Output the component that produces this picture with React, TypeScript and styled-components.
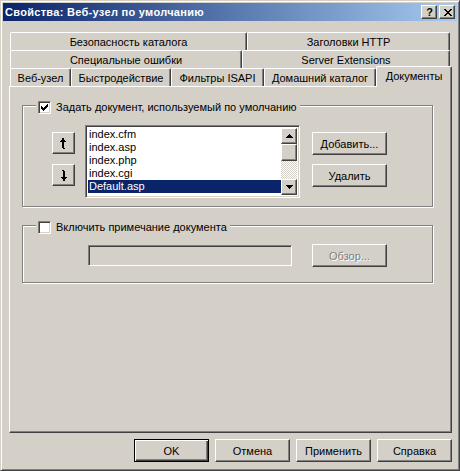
import React from 'react';
import styled, { createGlobalStyle, css } from 'styled-components';

const FACE = '#D4D0C8';
const SHADOW = '#808080';
const DARK = '#404040';

const GlobalStyle = createGlobalStyle`
  html, body { margin: 0; padding: 0; background: ${FACE}; }
  body {
    font-family: "Liberation Sans", Arial, sans-serif;
    font-size: 11px;
    color: #000;
  }
  * { box-sizing: border-box; }
`;

const raised = css`
  border: 1px solid;
  border-color: #fff ${DARK} ${DARK} #fff;
  box-shadow: inset -1px -1px 0 ${SHADOW}, inset 1px 1px 0 ${FACE};
  background: ${FACE};
`;

const sunken = css`
  border: 1px solid;
  border-color: ${SHADOW} #fff #fff ${SHADOW};
  box-shadow: inset 1px 1px 0 ${DARK}, inset -1px -1px 0 ${FACE};
`;

const Window = styled.div`
  width: 460px;
  height: 471px;
  background: ${FACE};
  border: 1px solid;
  border-color: ${FACE} ${DARK} ${DARK} ${FACE};
  box-shadow: inset 1px 1px 0 #fff, inset -1px -1px 0 ${SHADOW};
  padding: 2px;
  display: flex;
  flex-direction: column;
`;

const TitleBar = styled.div`
  height: 18px;
  display: flex;
  align-items: center;
  padding-left: 2px;
  background: linear-gradient(to right, #0a246a, #a6caf0);
`;

const TitleText = styled.div`
  flex: 1;
  color: #fff;
  font-weight: bold;
  font-size: 11px;
  letter-spacing: 0.3px;
  line-height: 18px;
  white-space: nowrap;
`;

const CaptionButtons = styled.div`
  display: flex;
  gap: 2px;
  margin-right: 2px;
`;

const CaptionButton = styled.div`
  ${raised};
  width: 16px;
  height: 14px;
  display: flex;
  align-items: center;
  justify-content: center;
  font-weight: bold;
  font-size: 11px;
  line-height: 12px;
  padding-left: 1px;
`;

const Body = styled.div`
  flex: 1;
  display: flex;
  flex-direction: column;
  padding: 11px 5px 0 6px;
`;

const TabStrip = styled.div`
  display: flex;
  flex-direction: column;
  margin-left: 1px;
`;

const TabRow = styled.div`
  display: flex;
  align-items: flex-end;
  height: 18px;
`;

const Tab = styled.div<{ $w: number; $active?: boolean }>`
  width: ${(p) => p.$w}px;
  height: ${(p) => (p.$active ? 21 : 18)}px;
  flex: none;
  display: flex;
  align-items: center;
  justify-content: center;
  white-space: nowrap;
  background: ${FACE};
  border-top: 1px solid #fff;
  border-left: 1px solid #fff;
  border-right: 1px solid ${DARK};
  border-radius: 2px 2px 0 0;
  box-shadow: inset -1px 0 0 ${SHADOW};
  padding-top: ${(p) => (p.$active ? 0 : 1)}px;
  padding-bottom: ${(p) => (p.$active ? 3 : 0)}px;
  ${(p) =>
    p.$active &&
    css`
      position: relative;
      z-index: 1;
      margin-bottom: -1px;
    `}
`;

const Panel = styled.div`
  height: 347px;
  border: 1px solid;
  border-color: #fff ${DARK} ${DARK} #fff;
  box-shadow: inset -1px -1px 0 ${SHADOW};
  padding: 18px 0 0 12px;
  display: flex;
  flex-direction: column;
`;

const Group = styled.div<{ $gap?: number; $bottom: number }>`
  width: 411px;
  margin-top: ${(p) => p.$gap ?? 0}px;
  border: 1px solid ${SHADOW};
  box-shadow: 1px 1px 0 #fff, inset 1px 1px 0 #fff;
  padding-bottom: ${(p) => p.$bottom}px;
`;

const Legend = styled.label`
  display: flex;
  align-items: center;
  gap: 5px;
  width: fit-content;
  height: 13px;
  line-height: 13px;
  margin: -5px 0 0 13px;
  padding: 0 3px 0 2px;
  background: ${FACE};
  white-space: nowrap;
`;

const CheckBox = styled.span`
  ${sunken};
  width: 13px;
  height: 13px;
  background: #fff;
  display: flex;
  align-items: center;
  justify-content: center;
  flex: none;
`;

const ListRow = styled.div`
  display: flex;
  margin-top: 11px;
  padding-left: 29px;
`;

const ArrowColumn = styled.div`
  display: flex;
  flex-direction: column;
  gap: 10px;
  padding-top: 7px;
`;

const ArrowButton = styled.div`
  ${raised};
  width: 23px;
  height: 22px;
  display: flex;
  align-items: center;
  justify-content: center;
`;

const ListBox = styled.div`
  ${sunken};
  width: 215px;
  height: 73px;
  margin-left: 10px;
  background: #fff;
  padding: 2px;
  display: flex;
  overflow: hidden;
`;

const Items = styled.div`
  flex: 1;
  overflow: hidden;
`;

const Item = styled.div<{ $selected?: boolean }>`
  height: 13px;
  line-height: 13px;
  padding-left: 1px;
  white-space: nowrap;
  background: ${(p) => (p.$selected ? '#0a246a' : 'transparent')};
  color: ${(p) => (p.$selected ? '#fff' : '#000')};
`;

const ScrollBar = styled.div`
  width: 16px;
  display: flex;
  flex-direction: column;
`;

const ScrollButton = styled.div<{ $h: number }>`
  ${raised};
  height: ${(p) => p.$h}px;
  flex: none;
  display: flex;
  align-items: center;
  justify-content: center;
`;

const Track = styled.div`
  flex: 1;
  background: repeating-conic-gradient(#fff 0 25%, ${FACE} 0 50%) 0 0 / 2px 2px;
`;

const SideColumn = styled.div`
  display: flex;
  flex-direction: column;
  gap: 9px;
  padding-top: 7px;
  margin-left: 12px;
`;

const Button = styled.div<{ $default?: boolean; $disabled?: boolean }>`
  ${raised};
  width: 75px;
  height: 23px;
  flex: none;
  display: flex;
  align-items: center;
  justify-content: center;
  white-space: nowrap;
  ${(p) =>
    p.$default &&
    css`
      border: 1px solid #000;
      box-shadow: inset 1px 1px 0 #fff, inset -1px -1px 0 ${DARK}, inset -2px -2px 0 ${SHADOW};
    `}
  ${(p) =>
    p.$disabled &&
    css`
      color: ${SHADOW};
      text-shadow: 1px 1px 0 #fff;
    `}
`;

const NoteRow = styled.div`
  display: flex;
  align-items: center;
  gap: 20px;
  margin-top: 10px;
  padding-left: 65px;
`;

const TextInput = styled.div`
  ${sunken};
  width: 204px;
  height: 21px;
  background: ${FACE};
`;

const Footer = styled.div`
  display: flex;
  justify-content: flex-end;
  gap: 6px;
  margin-top: 6px;
`;

const Check = () => (
  <svg width="7" height="7" viewBox="0 0 7 7" shapeRendering="crispEdges">
    <path d="M6 0h1v3h-1v1h-1v1h-1v1h-1v1h-1v-1h-1v-1h-1v-3h1v1h1v1h1v-1h1v-1h1z" fill="#000" />
  </svg>
);

const CloseGlyph = () => (
  <svg width="8" height="7" viewBox="0 0 8 7" shapeRendering="crispEdges">
    <path
      d="M0 0h2v1h1v1h2v-1h1v-1h2v1h-1v1h-1v1h-1v1h1v1h1v1h1v1h-2v-1h-1v-1h-2v1h-1v1h-2v-1h1v-1h1v-1h1v-1h-1v-1h-1v-1h-1z"
      fill="#000"
    />
  </svg>
);

const UpGlyph = () => (
  <svg width="7" height="11" viewBox="0 0 7 11" shapeRendering="crispEdges">
    <path d="M2 0h2v2h1v1h1v1h-2v6h1v1h-2v-1h-1v-6h-2v-1h1v-1h1z" fill="#000" />
  </svg>
);

const DownGlyph = () => (
  <svg width="7" height="11" viewBox="0 0 7 11" shapeRendering="crispEdges" style={{ transform: 'rotate(180deg)' }}>
    <path d="M2 0h2v2h1v1h1v1h-2v6h1v1h-2v-1h-1v-6h-2v-1h1v-1h1z" fill="#000" />
  </svg>
);

const TriUp = () => (
  <svg width="7" height="4" viewBox="0 0 7 4" shapeRendering="crispEdges">
    <path d="M3 0h1v1h1v1h1v1h1v1h-7v-1h1v-1h1v-1h1z" fill="#000" />
  </svg>
);

const TriDown = () => (
  <svg width="7" height="4" viewBox="0 0 7 4" shapeRendering="crispEdges">
    <path d="M0 0h7v1h-1v1h-1v1h-1v1h-1v-1h-1v-1h-1v-1h-1z" fill="#000" />
  </svg>
);

const files = ['index.cfm', 'index.asp', 'index.php', 'index.cgi', 'Default.asp', 'Default.htm'];

export default function App() {
  return (
    <>
      <GlobalStyle />
      <Window>
        <TitleBar>
          <TitleText>Свойства: Веб-узел по умолчанию</TitleText>
          <CaptionButtons>
            <CaptionButton>?</CaptionButton>
            <CaptionButton>
              <CloseGlyph />
            </CaptionButton>
          </CaptionButtons>
        </TitleBar>
        <Body>
          <TabStrip>
            <TabRow>
              <Tab $w={237}>Безопасность каталога</Tab>
              <Tab $w={203}>Заголовки HTTP</Tab>
            </TabRow>
            <TabRow>
              <Tab $w={232}>Специальные ошибки</Tab>
              <Tab $w={208}>Server Extensions</Tab>
            </TabRow>
            <TabRow>
              <Tab $w={61}>Веб-узел</Tab>
              <Tab $w={100}>Быстродействие</Tab>
              <Tab $w={93}>Фильтры ISAPI</Tab>
              <Tab $w={112}>Домашний каталог</Tab>
              <Tab $w={76} $active>
                Документы
              </Tab>
            </TabRow>
          </TabStrip>
          <Panel>
            <Group $bottom={8}>
              <Legend>
                <CheckBox>
                  <Check />
                </CheckBox>
                Задать документ, используемый по умолчанию
              </Legend>
              <ListRow>
                <ArrowColumn>
                  <ArrowButton>
                    <UpGlyph />
                  </ArrowButton>
                  <ArrowButton>
                    <DownGlyph />
                  </ArrowButton>
                </ArrowColumn>
                <ListBox>
                  <Items>
                    {files.map((f) => (
                      <Item key={f} $selected={f === 'Default.asp'}>
                        {f}
                      </Item>
                    ))}
                  </Items>
                  <ScrollBar>
                    <ScrollButton $h={16}>
                      <TriUp />
                    </ScrollButton>
                    <ScrollButton $h={17} />
                    <Track />
                    <ScrollButton $h={16}>
                      <TriDown />
                    </ScrollButton>
                  </ScrollBar>
                </ListBox>
                <SideColumn>
                  <Button>Добавить...</Button>
                  <Button>Удалить</Button>
                </SideColumn>
              </ListRow>
            </Group>
            <Group $gap={18} $bottom={15}>
              <Legend>
                <CheckBox />
                Включить примечание документа
              </Legend>
              <NoteRow>
                <TextInput />
                <Button $disabled>Обзор...</Button>
              </NoteRow>
            </Group>
          </Panel>
          <Footer>
            <Button $default>OK</Button>
            <Button>Отмена</Button>
            <Button>Применить</Button>
            <Button>Справка</Button>
          </Footer>
        </Body>
      </Window>
    </>
  );
}
